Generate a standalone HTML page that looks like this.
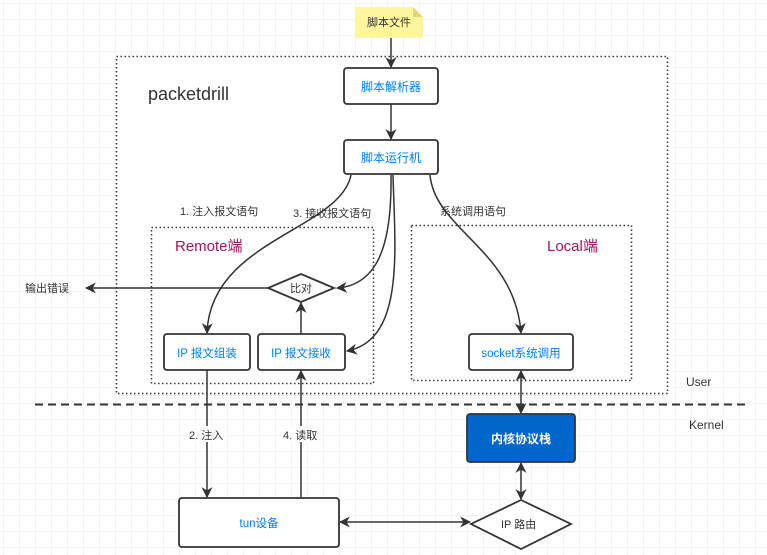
<!DOCTYPE html>
<html><head><meta charset="utf-8"><style>
html,body{margin:0;padding:0;background:#fff}
svg{display:block}
text{font-family:"Liberation Sans","Noto Sans CJK SC",sans-serif}
</style></head><body>
<svg width="767" height="555" viewBox="0 0 767 555" xmlns="http://www.w3.org/2000/svg">
<defs>
<pattern id="g" width="16" height="16" patternUnits="userSpaceOnUse" x="4" y="4">
<path d="M16 0V16M0 16H16" fill="none" stroke="#e8e8e8" stroke-width="1"/>
</pattern>
<marker id="a" viewBox="0 0 10 10" refX="9" refY="5" markerWidth="11" markerHeight="11" orient="auto-start-reverse" markerUnits="userSpaceOnUse">
<path d="M0 0L10 5L0 10L3 5Z" fill="#333"/>
</marker>
</defs>
<rect width="767" height="555" fill="url(#g)"/>
<rect x="116.5" y="56.5" width="551" height="337" fill="#fff" stroke="#333" stroke-width="1.5" stroke-dasharray="1.5,2.5"/>
<rect x="151.5" y="227.5" width="222" height="156" fill="none" stroke="#333" stroke-width="1.5" stroke-dasharray="1.5,2.5"/>
<rect x="411.5" y="225.5" width="220" height="155" fill="none" stroke="#333" stroke-width="1.5" stroke-dasharray="1.5,2.5"/>
<line x1="35" y1="404.5" x2="745" y2="404.5" stroke="#333" stroke-width="2" stroke-dasharray="8,5"/>
<path d="M355 7H413L423 17V38H355Z" fill="#fff59d"/>
<path d="M413 7V17H423Z" fill="#e0d67a"/>
<text x="389" y="26" font-size="11" fill="#333" text-anchor="middle">脚本文件</text>
<text x="148" y="100" font-size="18" fill="#333">packetdrill</text>
<text x="175" y="251" font-size="15" fill="#a0175a">Remote端</text>
<text x="547" y="251" font-size="15" fill="#a0175a">Local端</text>
<g stroke="#333" stroke-width="1.5" fill="none">
<line x1="391" y1="38" x2="391" y2="67" marker-end="url(#a)"/>
<line x1="391" y1="104" x2="391" y2="139" marker-end="url(#a)"/>
<path d="M351 175C340 230 210 240 207 333" marker-end="url(#a)"/>
<path d="M391 175C392 240 380 285 337 288" marker-end="url(#a)"/>
<path d="M393 175C395 250 405 340 347 351" marker-end="url(#a)"/>
<path d="M430 175C435 230 515 250 521 333" marker-end="url(#a)"/>
<line x1="268" y1="288" x2="86" y2="288" marker-end="url(#a)"/>
<line x1="301" y1="334" x2="301" y2="303" marker-end="url(#a)"/>
<line x1="207" y1="370" x2="207" y2="497" marker-end="url(#a)"/>
<line x1="301" y1="497" x2="301" y2="371" marker-end="url(#a)"/>
<line x1="521" y1="371" x2="521" y2="413" marker-start="url(#a)" marker-end="url(#a)"/>
<line x1="521" y1="463" x2="521" y2="499" marker-start="url(#a)" marker-end="url(#a)"/>
<line x1="340" y1="522" x2="470" y2="522" marker-start="url(#a)" marker-end="url(#a)"/>
</g>
<g stroke="#333" stroke-width="1.8" fill="#fff">
<rect x="344" y="68" width="94" height="36" rx="3"/>
<rect x="344" y="140" width="94" height="34" rx="3"/>
<rect x="164" y="334" width="86" height="36" rx="3"/>
<rect x="258" y="334" width="87" height="36" rx="3"/>
<rect x="469" y="334" width="104" height="36" rx="3"/>
<rect x="179" y="498" width="160" height="49" rx="3"/>
<rect x="467" y="414" width="108" height="48" rx="3" fill="#0066cc"/>
<path d="M301 274L334 288L301 302L268 288Z"/>
<path d="M521 500L571 524L521 549L471 524Z"/>
</g>
<g font-size="12" fill="#007fff" text-anchor="middle">
<text x="391" y="91">脚本解析器</text>
<text x="391" y="162">脚本运行机</text>
<text x="207" y="357" font-size="11.5">IP 报文组装</text>
<text x="301" y="357" font-size="11.5">IP 报文接收</text>
<text x="521" y="357" font-size="11.5">socket系统调用</text>
<text x="259" y="527" font-size="11.5">tun设备</text>
<text x="521" y="443" fill="#fff" font-weight="bold">内核协议栈</text>
</g>
<g font-size="11" fill="#333">
<text x="290" y="292">比对</text>
<text x="501" y="528">IP 路由</text>
<text x="25" y="292">输出错误</text>
<text x="180" y="215">1. 注入报文语句</text>
<text x="293" y="217">3. 接收报文语句</text>
<text x="440" y="215">系统调用语句</text>
<text x="686" y="386" font-size="12">User</text>
<text x="689" y="429" font-size="12">Kernel</text>
</g>
<rect x="187" y="426" width="40" height="16" fill="#fff"/>
<rect x="282" y="426" width="40" height="16" fill="#fff"/>
<g font-size="11" fill="#333">
<text x="189" y="439">2. 注入</text>
<text x="283" y="439">4. 读取</text>
</g>
</svg>
</body></html>
